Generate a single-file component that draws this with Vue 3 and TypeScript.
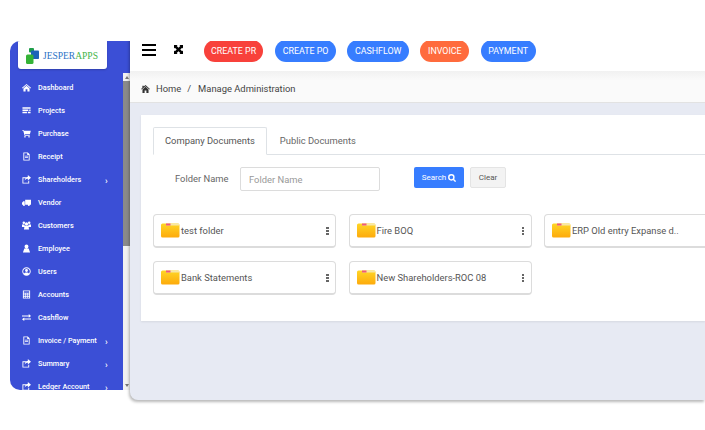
<template>
  <div class="page">
    <div class="shell">
      <aside class="sidebar">
        <div class="logo">
          <svg class="logo-mark" width="13" height="16" viewBox="0 0 13 16">
            <rect x="3" y="0" width="5" height="4.5" rx="1" fill="#1e9e4a" />
            <rect x="5" y="2.5" width="8" height="8.5" rx="0.8" fill="#1c63b8" />
            <rect x="0" y="6.5" width="7.5" height="9.5" rx="1.5" fill="#35b336" />
          </svg>
          <span class="logo-text"><span class="logo-a">JESPER</span><span class="logo-b">APPS</span></span>
        </div>
        <nav class="menu">
          <div v-for="item in menu" :key="item.label" class="menu-item">
            <svg class="menu-icon" width="9" height="9" viewBox="0 0 10 10" fill="#fff">
              <path :d="item.icon" />
            </svg>
            <span class="menu-label">{{ item.label }}</span>
            <span v-if="item.arrow" class="menu-arrow">›</span>
          </div>
        </nav>
        <div class="scrollbar">
          <span class="sb-up"></span>
          <span class="sb-thumb"></span>
          <span class="sb-down"></span>
        </div>
      </aside>
      <main class="main">
        <header class="topbar">
          <div class="burger"><i></i><i></i><i></i></div>
          <svg class="expand" width="9" height="9" viewBox="0 0 10 10" fill="#000">
            <path d="M0 0H4L3 1 5 3 7 1 6 0H10V4L9 3 7 5 9 7 10 6V10H6L7 9 5 7 3 9 4 10H0V6L1 7 3 5 1 3 0 4Z" />
          </svg>
          <button v-for="b in actions" :key="b.label" class="pill" :class="b.tone">{{ b.label }}</button>
        </header>
        <div class="crumbs">
          <svg width="9" height="8" viewBox="0 0 10 9" fill="#333">
            <path d="M5 0 L10 4.4 9.3 5 5 1.3 0.7 5 0 4.4 1.5 3.1V0.8H3V1.8ZM1.6 5 5 2.1 8.4 5V9H6V6.2H4V9H1.6Z" />
          </svg>
          <span class="crumb-home">Home</span>
          <span class="crumb-sep">/</span>
          <span>Manage Administration</span>
        </div>
        <div class="content">
          <section class="card">
            <div class="tabs">
              <div class="tab active">Company Documents</div>
              <div class="tab">Public Documents</div>
            </div>
            <div class="filter">
              <label class="filter-label">Folder Name</label>
              <input class="filter-input" placeholder="Folder Name" />
              <button class="btn-search">
                Search
                <svg width="8" height="8" viewBox="0 0 10 10" fill="none" stroke="#fff" stroke-width="1.8">
                  <circle cx="4.2" cy="4.2" r="3.2" />
                  <path d="M6.6 6.6 9.5 9.5" />
                </svg>
              </button>
              <button class="btn-clear">Clear</button>
            </div>
            <div class="folders">
              <div v-for="f in folders" :key="f" class="folder">
                <svg class="folder-icon" width="19" height="15" viewBox="0 0 19 15">
                  <defs>
                    <linearGradient id="fold" x1="0" y1="0" x2="0" y2="1">
                      <stop offset="0" stop-color="#ffd626" />
                      <stop offset="1" stop-color="#fdaa0c" />
                    </linearGradient>
                  </defs>
                  <rect x="0" y="0.5" width="18.5" height="14" rx="1.5" fill="url(#fold)" />
                  <rect x="5" y="0.5" width="13" height="2" fill="#f7e7a8" />
                  <rect x="5" y="0.5" width="4.5" height="2" fill="#ee5a7c" />
                </svg>
                <span class="folder-name">{{ f }}</span>
                <span class="kebab"><i></i><i></i><i></i></span>
              </div>
            </div>
          </section>
        </div>
      </main>
    </div>
  </div>
</template>

<script setup lang="ts">
interface MenuEntry {
  label: string;
  icon: string;
  arrow?: boolean;
}

const house = 'M5 1 L10 5.4 9.3 6 5 2.3 0.7 6 0 5.4ZM1.6 6 5 3.1 8.4 6V9.5H6V7H4V9.5H1.6Z';
const share = 'M0.5 2.5H5.5V3.5H1.5V8.5H7V6.5H8V9.5H0.5ZM6.5 0 10 3 6.5 6V4.3C4.8 4.3 3.8 5 3 6.3 3.2 4 4.6 2.3 6.5 2Z';
const doc = 'M1.5 0.5H6.5L8.5 2.5V9.5H1.5ZM2.5 1.5V8.5H7.5V3.2H5.8V1.5ZM3.3 4.2H6.7V5H3.3ZM3.3 5.8H6.7V6.6H3.3Z';

const menu: MenuEntry[] = [
  { label: 'Dashboard', icon: house },
  { label: 'Projects', icon: 'M0.5 1.5H9.5V3H0.5ZM0.5 4H7V5.5H0.5ZM8 4H9.5V5.5H8ZM0.5 6.5H5.5V8H0.5ZM6.5 6.5H9.5V8H6.5Z' },
  { label: 'Purchase', icon: 'M0 1H1.8L2.2 2H9.8L8.8 5.8H3.3L3.6 6.6H8.6V7.4H2.9L1.3 1.8H0ZM3.3 7.8A0.9 0.9 0 1 1 3.3 9.6 0.9 0.9 0 1 1 3.3 7.8ZM7.8 7.8A0.9 0.9 0 1 1 7.8 9.6 0.9 0.9 0 1 1 7.8 7.8Z' },
  { label: 'Receipt', icon: doc },
  { label: 'Shareholders', icon: share, arrow: true },
  { label: 'Vendor', icon: 'M3.5 2H10V7.5H3.5ZM0 7.5V5.2L1.4 3.5H3V7.5ZM2.2 6.8A1.1 1.1 0 1 1 2.2 9 1.1 1.1 0 1 1 2.2 6.8ZM7.6 6.8A1.1 1.1 0 1 1 7.6 9 1.1 1.1 0 1 1 7.6 6.8Z' },
  { label: 'Customers', icon: 'M2 0.5A1.4 1.4 0 1 1 2 3.3 1.4 1.4 0 1 1 2 0.5ZM8 0.5A1.4 1.4 0 1 1 8 3.3 1.4 1.4 0 1 1 8 0.5ZM5 1.5A1.8 1.8 0 1 1 5 5.1 1.8 1.8 0 1 1 5 1.5ZM0 3.8H2.8L3 6.8H0ZM7.2 3.8H10V6.8H7ZM2.8 5.4H7.2L7.8 9.5H2.2Z' },
  { label: 'Employee', icon: 'M5 0.5A2.2 2.2 0 1 1 5 4.9 2.2 2.2 0 1 1 5 0.5ZM2.6 5H7.4L9 9.5H1Z' },
  { label: 'Users', icon: 'M5 0.3A4.7 4.7 0 1 1 5 9.7 4.7 4.7 0 1 1 5 0.3ZM5 1.3A3.7 3.7 0 0 0 2.2 7.4C2.8 6.5 3.8 6.2 5 6.2 6.2 6.2 7.2 6.5 7.8 7.4A3.7 3.7 0 0 0 5 1.3ZM5 2.3A1.6 1.6 0 1 1 5 5.5 1.6 1.6 0 1 1 5 2.3Z' },
  { label: 'Accounts', icon: 'M1 0.5H9V9.5H1ZM2 1.5V3H8V1.5ZM2 4V5H3.5V4ZM4.2 4V5H5.8V4ZM6.5 4V5H8V4ZM2 5.8V6.8H3.5V5.8ZM4.2 5.8V6.8H5.8V5.8ZM6.5 5.8V6.8H8V5.8ZM2 7.5V8.5H3.5V7.5ZM4.2 7.5V8.5H5.8V7.5ZM6.5 7.5V8.5H8V7.5Z' },
  { label: 'Cashflow', icon: 'M0 2.8H7.5V1.2L10 3.4 7.5 5.2V3.9H0ZM10 6.2H2.5V5L0 7 2.5 8.8V7.3H10Z' },
  { label: 'Invoice / Payment', icon: doc, arrow: true },
  { label: 'Summary', icon: share, arrow: true },
  { label: 'Ledger Account', icon: share, arrow: true },
];

const actions = [
  { label: 'CREATE PR', tone: 'red' },
  { label: 'CREATE PO', tone: 'blue' },
  { label: 'CASHFLOW', tone: 'blue' },
  { label: 'INVOICE', tone: 'orange' },
  { label: 'PAYMENT', tone: 'blue' },
];

const folders = [
  'test folder',
  'Fire BOQ',
  'ERP Old entry Expanse d..',
  'Bank Statements',
  'New Shareholders-ROC 08',
];
</script>

<style>
html, body { margin: 0; background: #fff; overflow: hidden; }
</style>

<style scoped>
.page {
  width: 705px;
  height: 430px;
  padding: 31px 0 0 10px;
  box-sizing: border-box;
  font-family: Roboto, "Liberation Sans", sans-serif;
  overflow: hidden;
}
.shell { display: flex; align-items: flex-start; width: 695px; }

.sidebar {
  width: 120px;
  height: 349px;
  margin-top: 10px;
  flex-shrink: 0;
  background: #3b4fd6;
  border-radius: 10px 0 0 10px;
  overflow: hidden;
  position: relative;
}
.logo {
  width: 89px;
  height: 27.5px;
  margin-left: 8px;
  background: #fff;
  border-radius: 0 0 3px 3px;
  box-shadow: 0 1px 2px rgba(0,0,0,0.2);
  display: flex;
  align-items: center;
  padding: 2px 0 0 8px;
  box-sizing: border-box;
  gap: 4px;
}
.logo-text { font-family: "Liberation Serif", serif; font-size: 9.5px; white-space: nowrap; }
.logo-a { color: #2a73c5; }
.logo-b { color: #45b549; }
.menu { padding-top: 7.5px; }
.menu-item {
  height: 23px;
  display: flex;
  align-items: center;
  color: #fff;
  font-size: 7.3px;
  font-weight: 500;
  padding-left: 12px;
  position: relative;
}
.menu-icon { flex-shrink: 0; margin-right: 7px; }
.menu-arrow {
  position: absolute;
  left: 95px;
  top: 8px;
  font-size: 9px;
}

.scrollbar {
  position: absolute;
  top: 32px;
  right: 0;
  bottom: 0;
  width: 7px;
  background: #f1f1f1;
  display: flex;
  flex-direction: column;
  align-items: center;
}
.sb-up, .sb-down { width: 0; height: 0; border-left: 2.5px solid transparent; border-right: 2.5px solid transparent; }
.sb-up { border-bottom: 3px solid #777; margin: 3px 0 2px; }
.sb-thumb { width: 7px; height: 165px; background: #8a8a8a; }
.sb-down { border-top: 3px solid #777; margin-top: auto; margin-bottom: 3px; }

.main {
  flex: 1;
  min-width: 0;
  height: 369px;
  display: flex;
  flex-direction: column;
  background: #e7eaf3;
  border-radius: 0 0 0 8px;
  box-shadow: -1px 2px 3px rgba(0,0,0,0.28);
  clip-path: inset(10px -10px -10px -10px);
}
.topbar {
  height: 40px;
  flex-shrink: 0;
  background: #fff;
  display: flex;
  align-items: center;
  padding-left: 12px;
  box-sizing: border-box;
}
.burger { width: 14px; margin: -3px 18px 0 0; }
.burger i { display: block; height: 2px; background: #000; margin-bottom: 3px; }
.burger i:last-child { margin-bottom: 0; }
.expand { margin: -3px 21px 0 0; }
.pill {
  height: 22px;
  border: none;
  border-radius: 11px;
  color: #fff;
  font-family: inherit;
  font-size: 8.9px;
  padding: 0 7.5px;
  margin-right: 11.5px;
  white-space: nowrap;
}
.pill.red { padding: 0 7px; margin-right: 12px; }
.red { background: #f8413b; }
.blue { background: #377dff; }
.orange { background: #ff6b3d; }

.crumbs {
  height: 32px;
  flex-shrink: 0;
  box-sizing: border-box;
  background: linear-gradient(#f1f1f1, #fafafa 30%, #fafafa);
  border-bottom: 1px solid #e2e2e2;
  display: flex;
  align-items: center;
  padding: 4px 0 0 11px;
  font-size: 9.4px;
  color: #444;
}
.crumb-home { margin-left: 6px; }
.crumb-sep { margin: 0 7px 0 6px; }

.content { flex: 1; padding: 12px 0 0 11px; }
.card {
  height: 206px;
  box-sizing: border-box;
  background: #fff;
  box-shadow: 0 1px 2px rgba(0,0,0,0.08);
  padding: 12px 0 0 12px;
  overflow: hidden;
}
.tabs { display: flex; border-bottom: 1px solid #dee2e6; height: 27px; }
.tab {
  height: 27px;
  box-sizing: border-box;
  padding: 0 13px;
  display: flex;
  align-items: center;
  font-size: 9.4px;
  color: #666;
}
.tab.active {
  padding: 0 11px 1px;
  color: #555;
  background: #fff;
  border: 1px solid #dee2e6;
  border-bottom: 1px solid #fff;
  height: 28px;
  border-radius: 2px 2px 0 0;
}

.filter { display: flex; align-items: flex-start; padding: 12px 0 0 22px; }
.filter-label { font-size: 9.4px; color: #666; width: 65px; line-height: 24px; }
.filter-input {
  width: 140px;
  height: 24px;
  box-sizing: border-box;
  border: 1px solid #dcdcdc;
  border-radius: 2px;
  padding: 0 8px;
  font-family: inherit;
  font-size: 9.4px;
  outline: none;
}
.filter-input::placeholder { color: #999; }
.btn-search {
  width: 50px;
  height: 21px;
  margin-left: 34px;
  background: #377dff;
  border: none;
  border-radius: 2px;
  color: #fff;
  font-family: inherit;
  font-size: 8px;
  display: flex;
  align-items: center;
  justify-content: center;
  gap: 2px;
  padding: 0;
}
.btn-clear {
  width: 36px;
  height: 21px;
  margin-left: 6px;
  background: #f3f3f3;
  border: 1px solid #e4e4e4;
  border-radius: 2px;
  color: #555;
  font-family: inherit;
  font-size: 8px;
  padding: 0;
}

.folders {
  display: grid;
  grid-template-columns: repeat(3, 183px);
  column-gap: 12.5px;
  row-gap: 13px;
  margin-top: 23px;
}
.folder {
  height: 34px;
  box-sizing: border-box;
  border: 1px solid #dcdcdc;
  border-bottom-width: 2px;
  border-radius: 4px;
  display: flex;
  align-items: center;
  padding: 0 6px 0 7px;
  font-size: 9.4px;
  color: #555;
}
.folder-icon { flex-shrink: 0; margin-right: 1px; }
.folder-name { flex: 1; white-space: nowrap; }
.kebab { width: 3px; display: flex; flex-direction: column; gap: 1px; }
.kebab i { display: block; width: 2.5px; height: 2px; background: #666; }
</style>
